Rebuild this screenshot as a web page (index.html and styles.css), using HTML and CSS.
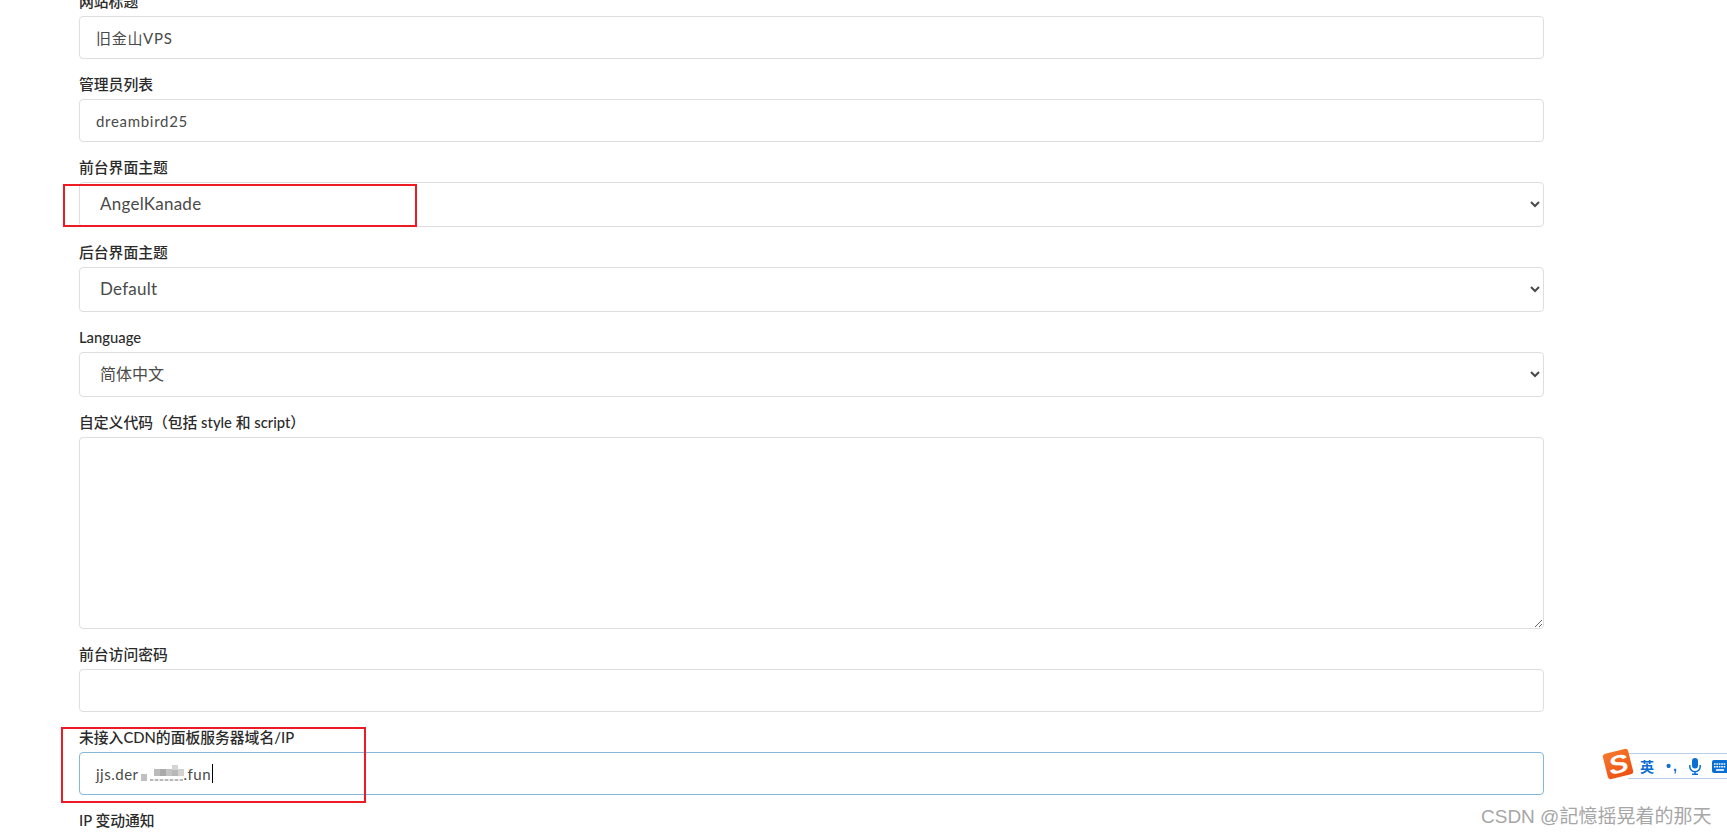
FILE: index.html
```html
<!DOCTYPE html>
<html lang="zh-CN">
<head>
    <meta charset="UTF-8">
    <meta name="viewport" content="width=device-width, initial-scale=1.0">
    <title>设置</title>
    <link rel="stylesheet" href="styles.css">
</head>
<body>
    <form class="settings-form">
        <div class="field">
            <label>网站标题</label>
            <div class="fake-input">旧金山VPS</div>
        </div>
        <div class="field">
            <label>管理员列表</label>
            <div class="fake-input">dreambird25</div>
        </div>
        <div class="field">
            <label>前台界面主题</label>
            <select class="select">
                <option>AngelKanade</option>
            </select>
        </div>
        <div class="field">
            <label>后台界面主题</label>
            <select class="select">
                <option>Default</option>
            </select>
        </div>
        <div class="field">
            <label>Language</label>
            <select class="select select-cjk">
                <option>简体中文</option>
            </select>
        </div>
        <div class="field">
            <label>自定义代码（包括 style 和 script）</label>
            <textarea class="textarea"></textarea>
        </div>
        <div class="field">
            <label>前台访问密码</label>
            <div class="fake-input"></div>
        </div>
        <div class="field">
            <label>未接入CDN的面板服务器域名/IP</label>
            <div class="fake-input focused">jjs.der<span class="mosaic"></span>.fun<span class="caret"></span></div>
        </div>
        <div class="field">
            <label>IP 变动通知</label>
        </div>
    </form>

    <div class="mark mark-theme"></div>
    <div class="mark mark-domain"></div>

    <div class="ime-bar">
        <div class="ime-logo"><span>S</span></div>
        <div class="ime-tools">
            <span class="ime-lang">英</span>
            <span class="ime-punct">•,</span>
            <svg class="ime-mic" width="12" height="17" viewBox="0 0 12 17">
                <rect x="3" y="0" width="6" height="10.5" rx="3" fill="#0a6ed2"/>
                <path d="M.8 7v1.5a5.2 5.2 0 0 0 10.4 0V7M6 13.5V16M3 16.2h6" fill="none" stroke="#0a6ed2" stroke-width="1.5"/>
            </svg>
            <svg class="ime-keys" width="16" height="13" viewBox="0 0 16 13">
                <rect width="16" height="13" rx="2" fill="#0a6ed2"/>
                <path d="M2 4h12M2 6.8h12" stroke="#fff" stroke-width="1.6" stroke-dasharray="1.6 .8"/>
                <path d="M4 10h8" stroke="#fff" stroke-width="1.6"/>
            </svg>
        </div>
    </div>

    <div class="watermark">CSDN @記憶摇晃着的那天</div>
</body>
</html>
```

FILE: styles.css
```css
html, body {
    height: 100%;
    overflow: hidden;
}

body {
    margin: 0;
    background-color: #fff;
    color: #333;
    font-family: "Lato", "Noto Sans CJK SC", sans-serif;
}

/* page is scrolled, the first label is cut by the top edge */
.settings-form {
    width: 1465px;
    margin: -9px 0 0 79px;
}

.field {
    margin-bottom: 15px;
}

label {
    display: block;
    height: 22px;
    margin-bottom: 3px;
    font-size: 14.8px;
    line-height: 20px;
    font-weight: 500;
    color: #2b2b2b;
}

.fake-input,
.select,
.textarea {
    display: block;
    width: 100%;
    box-sizing: border-box;
    border: 1px solid #dedede;
    border-radius: 4px;
    background-color: #fff;
    color: #4a4a4a;
    font-family: inherit;
}

.fake-input {
    display: flex;
    align-items: center;
    height: 43px;
    padding: 0 16px;
    font-size: 15px;
    letter-spacing: 0.7px;
}

.fake-input.focused {
    border-color: #85b7d9;
    letter-spacing: 0.5px;
}

.select {
    height: 45px;
    padding: 0 16px 2px;
    font-size: 17px;
    letter-spacing: 0.25px;
}

.select-cjk {
    font-size: 16px;
    letter-spacing: 0;
}

.textarea {
    height: 192px;
    padding: 12px 16px;
}

.mosaic {
    display: inline-block;
    flex: none;
    width: 45px;
    height: 18px;
    background:
        linear-gradient(#c0c0c0, #c0c0c0) 2px 9px / 6px 7px no-repeat,
        linear-gradient(#bbb, #bbb) 15px 4px / 6px 7px no-repeat,
        linear-gradient(#a9a9a9, #a9a9a9) 21px 4px / 6px 7px no-repeat,
        linear-gradient(#c2c2c2, #c2c2c2) 27px 4px / 6px 7px no-repeat,
        linear-gradient(#d4d4d4, #d4d4d4) 33px 0 / 6px 5px no-repeat,
        linear-gradient(#b8b8b8, #b8b8b8) 33px 5px / 6px 6px no-repeat,
        linear-gradient(#d2d2d2, #d2d2d2) 39px 4px / 6px 7px no-repeat,
        repeating-linear-gradient(90deg, #b8b8b8 0 3px, #e8e8e8 3px 5px) 11px 14px / 33px 2px no-repeat;
}

.caret {
    display: inline-block;
    flex: none;
    width: 1px;
    height: 19px;
    margin-left: 1px;
    background-color: #000;
}

.mark {
    position: absolute;
    box-sizing: border-box;
    border: 2px solid #ed1c24;
}

.mark-theme {
    left: 63px;
    top: 184px;
    width: 354px;
    height: 43px;
}

.mark-domain {
    left: 61px;
    top: 727px;
    width: 305px;
    height: 76px;
}

.ime-bar {
    position: absolute;
    left: 1602px;
    top: 749px;
    width: 125px;
    height: 30px;
}

.ime-logo {
    position: absolute;
    left: 3px;
    top: 2px;
    z-index: 1;
    display: flex;
    align-items: center;
    justify-content: center;
    width: 26px;
    height: 26px;
    border-radius: 3px;
    background: linear-gradient(160deg, #f57a2c, #ee4d12);
    transform: rotate(-14deg);
    color: #fff;
}

.ime-logo span {
    font: italic 700 25px/26px "Liberation Sans", sans-serif;
    transform: scaleX(1.2);
}

.ime-tools {
    display: flex;
    align-items: center;
    box-sizing: border-box;
    width: 99px;
    height: 26px;
    margin: 4px 0 0 26px;
    padding-left: 12px;
    border-top: 1px solid #b8cde8;
    border-bottom: 1px solid #b8cde8;
    background-color: #fff;
    color: #0a6ed2;
    overflow: hidden;
}

.ime-lang {
    flex: none;
    font: 700 14px/20px "Noto Sans CJK SC", sans-serif;
}

.ime-punct {
    flex: none;
    width: 23px;
    margin-left: 12px;
    font: 700 14px/20px "Liberation Sans", sans-serif;
    letter-spacing: 2px;
}

.ime-mic {
    flex: none;
}

.ime-keys {
    flex: none;
    margin-left: 11px;
}

.watermark {
    position: absolute;
    left: 1481px;
    top: 803px;
    font: 19px/28px "Liberation Sans", "Noto Sans CJK SC", sans-serif;
    color: #a6a6a6;
    white-space: nowrap;
}
```
